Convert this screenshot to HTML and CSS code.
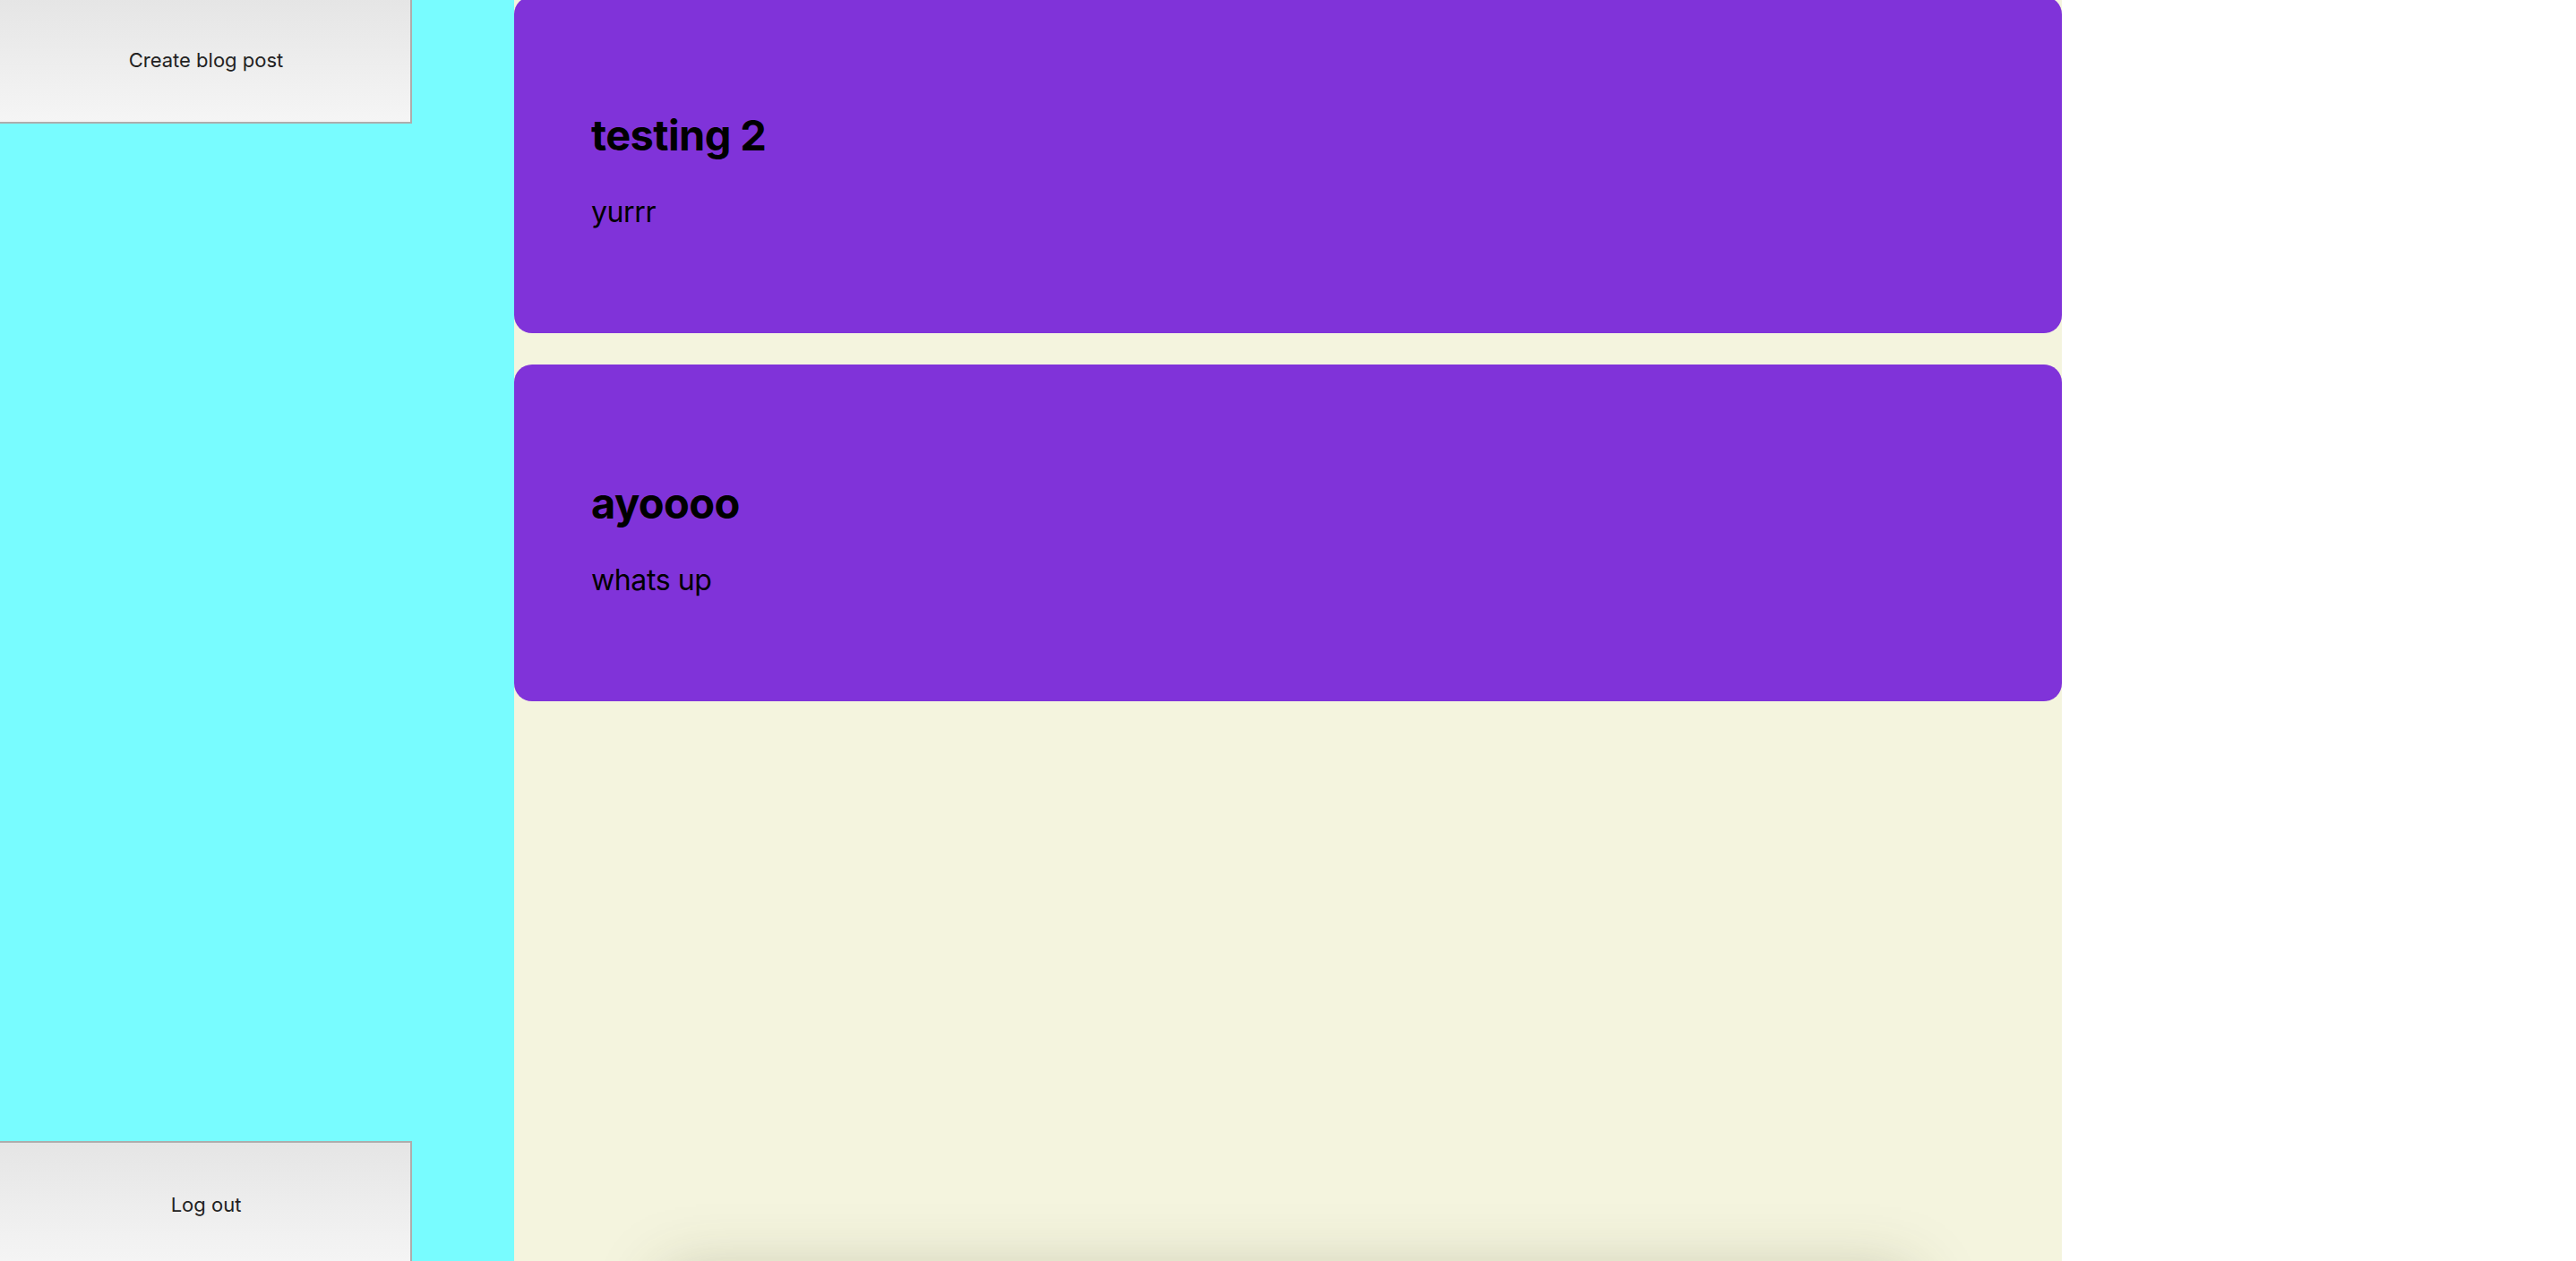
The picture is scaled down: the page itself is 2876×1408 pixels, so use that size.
FILE: index.html
```html
<!DOCTYPE html>
<html lang="en">
<head>
<meta charset="utf-8">
<title>Blog</title>
<link rel="stylesheet" href="styles.css">
</head>
<body>
<div class="layout">
  <aside class="sidebar">
    <button class="side-btn create">Create blog post</button>
    <button class="side-btn logout">Log out</button>
  </aside>
  <main class="feed">
    <article class="post">
      <h2 class="post-title">testing 2</h2>
      <p class="post-body">yurrr</p>
    </article>
    <article class="post">
      <h2 class="post-title">ayoooo</h2>
      <p class="post-body">whats up</p>
    </article>
    <div class="composer"></div>
  </main>
  <div class="gutter"></div>
</div>
</body>
</html>
```

FILE: styles.css
```css
html, body {
  margin: 0;
  padding: 0;
  height: 100%;
  overflow: hidden;
  background: #ffffff;
  font-family: Inter, "Noto Sans", "Liberation Sans", sans-serif;
}

.layout {
  display: grid;
  grid-template-columns: 574px 1728px 574px;
  height: 1408px;
}

.sidebar {
  background: #78fcff;
  display: flex;
  flex-direction: column;
  justify-content: space-between;
  overflow: hidden;
}

.side-btn {
  box-sizing: border-box;
  display: flex;
  align-items: center;
  justify-content: center;
  width: 462px;
  height: 142px;
  margin-left: -2px;
  border: 2px solid #adadad;
  background: linear-gradient(to bottom, #e5e5e5, #f5f5f5);
  color: #222222;
  font-family: Inter, "Noto Sans", "Liberation Sans", sans-serif;
  font-size: 22px;
  padding: 0 0 0 2px;
}

.create {
  margin-top: -4px;
}

.logout {
  margin-bottom: -8px;
}

.feed {
  background: #f4f4de;
  display: flex;
  flex-direction: column;
  gap: 35px;
  overflow: hidden;
}

.post {
  background: #8033d9;
  border-radius: 20px;
  height: 376px;
  box-sizing: border-box;
  padding: 86px 86px 0 86px;
  flex-shrink: 0;
}

.post:first-child {
  margin-top: -4px;
}

.post-title {
  margin: 40px 0 37px 0;
  font-size: 47px;
  font-weight: 700;
  letter-spacing: -0.6px;
  line-height: 58px;
  color: #000000;
}

.post-body {
  margin: 0;
  font-size: 32px;
  letter-spacing: -0.4px;
  line-height: 39px;
  color: #000000;
}

.composer {
  flex-shrink: 0;
  width: 1380px;
  height: 240px;
  margin: 612px auto 0 auto;
  background: #f4f4de;
  box-shadow: 0 0 70px 6px rgba(70, 70, 30, 0.28);
}

.gutter {
  background: #ffffff;
}
```
